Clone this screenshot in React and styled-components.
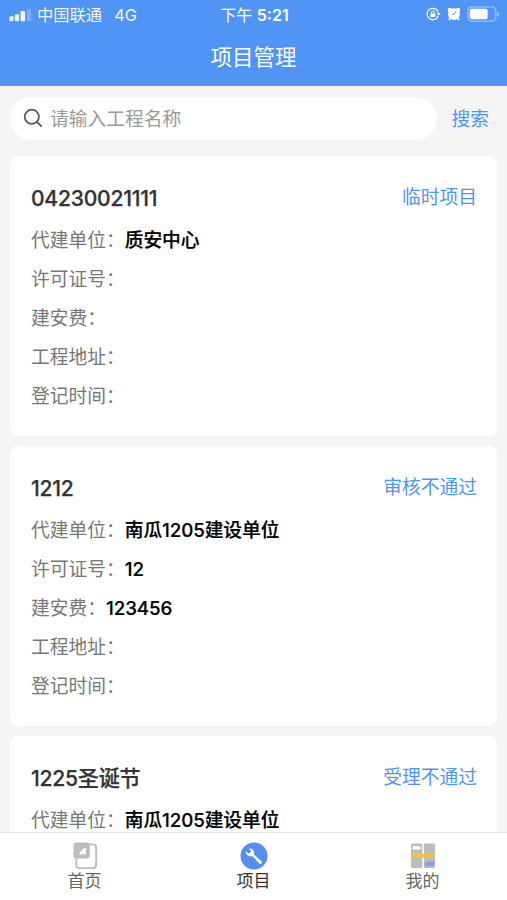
import styled, { createGlobalStyle } from 'styled-components';

const projects = [
  {
    name: '04230021111',
    status: '临时项目',
    fields: [['代建单位', '质安中心'], ['许可证号', ''], ['建安费', ''], ['工程地址', ''], ['登记时间', '']],
  },
  {
    name: '1212',
    status: '审核不通过',
    fields: [['代建单位', '南瓜1205建设单位'], ['许可证号', '12'], ['建安费', '123456'], ['工程地址', ''], ['登记时间', '']],
  },
  {
    name: '1225圣诞节',
    status: '受理不通过',
    fields: [['代建单位', '南瓜1205建设单位']],
  },
];

const SignalIcon = () => (
  <svg width="24" height="14" viewBox="0 0 24 14" fill="#fff">
    <rect x="0.5" y="8.2" width="4" height="5" rx="1" />
    <rect x="5.8" y="6.2" width="4.2" height="7" rx="1" />
    <rect x="11.5" y="3" width="4.6" height="10.2" rx="1" />
    <rect x="17.8" y="1" width="4.4" height="12.2" rx="1" opacity="0.28" />
  </svg>
);

const LockIcon = () => (
  <svg width="15" height="14" viewBox="0 0 15 14" fill="none" stroke="#fff" strokeWidth="1.2">
    <path d="M12.3 5.4A5.7 5.7 0 1 0 12.2 9" />
    <path d="M10.6 6.1h3.8l-1.9 2.7z" fill="#fff" stroke="none" />
    <rect x="4.4" y="6.4" width="5" height="3.7" rx="0.6" fill="#fff" stroke="none" />
    <path d="M5.4 6.6V5.4a1.5 1.5 0 0 1 3 0v1.2" strokeWidth="1" />
  </svg>
);

const AlarmIcon = () => (
  <svg width="14" height="14" viewBox="0 0 14 14" fill="#fff">
    <circle cx="7" cy="7.2" r="5.9" />
    <circle cx="2.9" cy="2.9" r="2.2" />
    <circle cx="11.1" cy="2.9" r="2.2" />
    <path d="M3.2 11l-1.2 2M10.8 11l1.2 2" stroke="#fff" strokeWidth="1.8" />
    <path d="M8.8 4.3L7.2 7.5H4.8" fill="none" stroke="#5095f5" strokeWidth="0.9" />
  </svg>
);

const BatteryIcon = () => (
  <svg width="33" height="16" viewBox="0 0 33 16">
    <rect x="0.8" y="0.8" width="28" height="14.4" rx="4.2" fill="none" stroke="#fff" strokeOpacity="0.42" strokeWidth="1.3" />
    <rect x="2.7" y="2.8" width="18" height="10.4" rx="2.2" fill="#fff" />
    <path d="M30.4 5.6c2 .6 2 4.2 0 4.8z" fill="#fff" opacity="0.45" />
  </svg>
);

const SearchIcon = () => (
  <svg width="20" height="20" viewBox="0 0 20 20" fill="none" stroke="#5c5c5c" strokeWidth="1.8" strokeLinecap="round">
    <circle cx="8.8" cy="8.8" r="7.1" />
    <path d="M14 14l4.2 4.2" />
  </svg>
);

const HomeIcon = () => (
  <svg width="28" height="28" viewBox="0 0 28 28">
    <rect x="5.3" y="2.4" width="19.8" height="23.7" rx="3" fill="#fff" stroke="#bdbdbd" strokeWidth="1.8" />
    <rect x="2.4" y="0.6" width="16.4" height="16" rx="3" fill="#bdbdbd" />
    <path d="M14.8 6v6.3H8.2c.2-1.6 1-2.6 2.3-3.2C11 7.4 12.600 6.100 14.800 6z" fill="#fff" />
  </svg>
);

const WrenchIcon = () => (
  <svg width="28" height="28" viewBox="0 0 28 28">
    <circle cx="14" cy="14" r="13.5" fill="#568df0" />
    <path
      d="M9 6.600c3.400-.5 5.800 2.600 4.900 5.800l7.500 6.800a1.500 1.500 0 0 1-2.100 2.200l-7-7.300c-3.400 1-6.700-1.500-6.400-4.900l3 2.400 2.400-2z"
      fill="#fff"
    />
  </svg>
);

const MineIcon = () => (
  <svg width="28" height="28" viewBox="0 0 28 28">
    <rect x="2" y="1.5" width="11.3" height="24.5" rx="1" fill="#bdbdbd" />
    <rect x="14.8" y="1.5" width="11.3" height="24.5" rx="1" fill="#bdbdbd" />
    <rect x="3.6" y="4" width="7.8" height="3.6" rx="1" fill="#fff" />
    <rect x="3" y="11.8" width="22" height="3.8" rx="0.6" fill="#efc343" />
    <path d="M16 24v-2.6l2-1.8h7V24z" fill="#859df2" />
  </svg>
);

const tabs = [
  { label: '首页', Icon: HomeIcon },
  { label: '项目', Icon: WrenchIcon, active: true },
  { label: '我的', Icon: MineIcon },
];

export default function App() {
  return (
    <>
      <GlobalStyle />
      <Screen>
        <Header>
          <StatusBar>
            <Carrier>
              <SignalIcon />
              <span>中国联通</span>
              <Network>4G</Network>
            </Carrier>
            <Clock>下午 <b>5:21</b></Clock>
            <Indicators>
              <LockIcon />
              <AlarmIcon />
              <BatteryIcon />
            </Indicators>
          </StatusBar>
          <PageTitle>项目管理</PageTitle>
        </Header>

        <SearchBar>
          <SearchBox>
            <SearchIcon />
            <SearchInput placeholder="请输入工程名称" />
          </SearchBox>
          <SearchButton>搜索</SearchButton>
        </SearchBar>

        <List>
          {projects.map((p) => (
            <Card key={p.name}>
              <CardHead>
                <Name>{p.name}</Name>
                <Status>{p.status}</Status>
              </CardHead>
              {p.fields.map(([label, value]) => (
                <Field key={label}>
                  <Label>{label}：</Label>
                  <Value>{value}</Value>
                </Field>
              ))}
            </Card>
          ))}
        </List>

        <TabBar>
          {tabs.map(({ label, Icon, active }) => (
            <Tab key={label} $active={active}>
              <Icon />
              <span>{label}</span>
            </Tab>
          ))}
        </TabBar>
      </Screen>
    </>
  )
}

const GlobalStyle = createGlobalStyle`
  * {
    box-sizing: border-box;
  }
  body {
    margin: 0;
    font-family: Inter, 'Noto Sans CJK SC', sans-serif;
  }
  svg {
    display: block;
    flex-shrink: 0;
  }
`
const Screen = styled.div`
  display: flex;
  flex-direction: column;
  height: 100vh;
  overflow: hidden;
  background: #f5f5f5;
`
const Header = styled.header`
  flex-shrink: 0;
  height: 86px;
  background: #5095f5;
  color: #fff;
`
const StatusBar = styled.div`
  display: grid;
  grid-template-columns: 1fr auto 1fr;
  align-items: center;
  height: 30px;
  padding: 0 7px 0 9px;
  font-size: 16px;
  line-height: 30px;
`
const Carrier = styled.div`
  display: flex;
  align-items: center;
  gap: 4px;
  font-size: 16.3px;
  opacity: 0.92;
`
const Network = styled.span`
  margin-left: 8px;
`
const Clock = styled.div`
  b {
    font-weight: 600;
  }
`
const Indicators = styled.div`
  display: flex;
  align-items: center;
  justify-content: flex-end;
  gap: 6px;
  margin-top: -2px;
`
const PageTitle = styled.h1`
  margin: 0;
  padding-top: 1px;
  font-size: 21.5px;
  font-weight: 400;
  line-height: 53px;
  text-align: center;
`
const SearchBar = styled.div`
  display: flex;
  align-items: center;
  flex-shrink: 0;
  height: 70px;
  padding: 0 18px 6px 10px;
`
const SearchBox = styled.label`
  display: flex;
  align-items: center;
  gap: 7px;
  width: 427px;
  height: 43px;
  padding: 0 13px;
  border-radius: 22px;
  background: #fff;
`
const SearchInput = styled.input`
  flex: 1;
  min-width: 0;
  padding: 2px 0 0;
  border: 0;
  outline: 0;
  background: none;
  font-family: inherit;
  font-size: 18.75px;
  &::placeholder {
    color: #999;
  }
`
const SearchButton = styled.button`
  margin-left: auto;
  padding: 0 0 2px;
  border: 0;
  background: none;
  color: #5095f5;
  font-family: inherit;
  font-size: 18.75px;
`
const List = styled.main`
  display: flex;
  flex-direction: column;
  gap: 10px;
  flex: 1;
  min-height: 0;
  padding: 0 10px;
  overflow: hidden;
`
const Card = styled.section`
  flex-shrink: 0;
  height: 280px;
  padding: 21px 20px 0 21px;
  border-radius: 8px;
  background: #fff;
`
const CardHead = styled.div`
  display: flex;
  align-items: center;
  justify-content: space-between;
  height: 44px;
`
const Name = styled.h2`
  margin: 0;
  color: #333;
  font-size: 21.1px;
  font-weight: 500;
  letter-spacing: -0.25px;
  line-height: 42px;
  -webkit-text-stroke: 0.25px #333;
`
const Status = styled.span`
  padding-bottom: 7px;
  color: #5095f5;
  font-size: 18.75px;
`
const Field = styled.div`
  display: flex;
  height: 39px;
  font-size: 18.75px;
  line-height: 39px;
`
const Label = styled.span`
  color: #777;
`
const Value = styled.span`
  color: #000;
  font-weight: 500;
  letter-spacing: -0.1px;
  -webkit-text-stroke: 0.2px #000;
`
const TabBar = styled.nav`
  display: flex;
  flex-shrink: 0;
  height: 68px;
  border-top: 1px solid #e6e6e6;
  background: #fff;
`
const Tab = styled.div`
  display: flex;
  flex: 1;
  flex-direction: column;
  align-items: center;
  padding-top: 9px;
  color: ${(props) => (props.$active ? '#333' : '#666')};
  font-size: 17px;
  line-height: 22px;
`
